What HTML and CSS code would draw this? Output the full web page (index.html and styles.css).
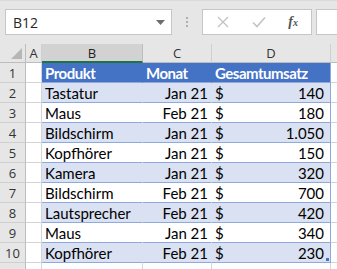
FILE: index.html
```html
<!DOCTYPE html>
<html lang="de">
<head>
<meta charset="utf-8">
<title>Tabelle</title>
<link rel="stylesheet" href="styles.css">
</head>
<body>
<div class="app">
  <div class="formula-bar">
    <div class="name-box">
      <span class="name-text">B12</span>
      <svg class="drop" width="9" height="5" viewBox="0 0 9 5"><path d="M0 0h9L4.5 5z" fill="#6d6d6d"/></svg>
    </div>
    <div class="grip"><i></i><i></i><i></i></div>
    <div class="fx-buttons">
      <svg width="12" height="12" viewBox="0 0 12 12"><path d="M1 1L11 11M11 1L1 11" stroke="#c4c4c4" stroke-width="1.4" fill="none"/></svg>
      <svg width="14" height="12" viewBox="0 0 14 12"><path d="M1 6.5L5 10.5L13 1.5" stroke="#c4c4c4" stroke-width="1.6" fill="none"/></svg>
      <span class="fx">f<sub>x</sub></span>
    </div>
    <div class="formula-input"></div>
  </div>

  <div class="sheet">
    <div class="corner"></div>
    <div class="colhead">A</div>
    <div class="colhead sel">B</div>
    <div class="colhead">C</div>
    <div class="colhead">D</div>
    <div class="colhead last"></div>

    <div class="rowhead">1</div><div class="cell"></div>
    <div class="cell th">Produkt</div><div class="cell th">Monat</div><div class="cell th">Gesamtumsatz</div><div class="cell"></div>

    <div class="rowhead">2</div><div class="cell"></div>
    <div class="cell band">Tastatur</div><div class="cell band r">Jan 21</div><div class="cell band money"><span>$</span><span>140</span></div><div class="cell"></div>

    <div class="rowhead">3</div><div class="cell"></div>
    <div class="cell plain">Maus</div><div class="cell plain r">Feb 21</div><div class="cell plain money"><span>$</span><span>180</span></div><div class="cell"></div>

    <div class="rowhead">4</div><div class="cell"></div>
    <div class="cell band">Bildschirm</div><div class="cell band r">Jan 21</div><div class="cell band money"><span>$</span><span>1.050</span></div><div class="cell"></div>

    <div class="rowhead">5</div><div class="cell"></div>
    <div class="cell plain">Kopfhörer</div><div class="cell plain r">Jan 21</div><div class="cell plain money"><span>$</span><span>150</span></div><div class="cell"></div>

    <div class="rowhead">6</div><div class="cell"></div>
    <div class="cell band">Kamera</div><div class="cell band r">Jan 21</div><div class="cell band money"><span>$</span><span>320</span></div><div class="cell"></div>

    <div class="rowhead">7</div><div class="cell"></div>
    <div class="cell plain">Bildschirm</div><div class="cell plain r">Feb 21</div><div class="cell plain money"><span>$</span><span>700</span></div><div class="cell"></div>

    <div class="rowhead">8</div><div class="cell"></div>
    <div class="cell band">Lautsprecher</div><div class="cell band r">Feb 21</div><div class="cell band money"><span>$</span><span>420</span></div><div class="cell"></div>

    <div class="rowhead">9</div><div class="cell"></div>
    <div class="cell plain">Maus</div><div class="cell plain r">Jan 21</div><div class="cell plain money"><span>$</span><span>340</span></div><div class="cell"></div>

    <div class="rowhead">10</div><div class="cell"></div>
    <div class="cell band">Kopfhörer</div><div class="cell band r">Feb 21</div><div class="cell band money end"><span>$</span><span>230</span><b class="handle"></b></div><div class="cell"></div>

    <div class="rowhead"></div><div class="cell"></div>
    <div class="cell"></div><div class="cell"></div><div class="cell"></div><div class="cell"></div>
  </div>
</div>
</body>
</html>
```

FILE: styles.css
```css
html, body {
  margin: 0;
  padding: 0;
  background: #ffffff;
}

.app {
  width: 337px;
  height: 269px;
  overflow: hidden;
  background: #e6e6e6;
  font-family: Lato, "Open Sans", sans-serif;
}

/* formula bar */
.formula-bar {
  height: 44px;
  box-sizing: border-box;
  padding: 8px 0 0 5px;
  display: flex;
  align-items: flex-start;
  border-top: 1px solid #dadada;
}

.name-box {
  width: 167px;
  height: 26px;
  box-sizing: border-box;
  background: #fff;
  border: 1px solid #c6c6c6;
  display: flex;
  align-items: center;
  justify-content: space-between;
  padding: 0 6px 0 7px;
}

.name-text {
  font-family: "Open Sans", sans-serif;
  font-size: 14px;
  color: #262626;
}

.drop { margin-top: 1px; }

.grip {
  width: 30px;
  height: 26px;
  display: flex;
  flex-direction: column;
  align-items: center;
  justify-content: center;
  gap: 2px;
}

.grip i {
  display: block;
  width: 2px;
  height: 2px;
  background: #b0b0b0;
}

.fx-buttons {
  width: 110px;
  height: 26px;
  box-sizing: border-box;
  background: #fff;
  border: 1px solid #c6c6c6;
  display: flex;
  align-items: center;
  justify-content: space-between;
  padding: 0 13px 0 14px;
}

.fx {
  font-family: "Liberation Serif", serif;
  font-style: italic;
  font-weight: bold;
  font-size: 14px;
  color: #555;
  line-height: 1;
}

.fx sub {
  font-size: 10px;
  vertical-align: 0;
}

.formula-input {
  margin-left: 4px;
  flex: 1;
  height: 26px;
  box-sizing: border-box;
  background: #fff;
  border: 1px solid #c6c6c6;
  border-right: none;
}

/* sheet grid */
.sheet {
  display: grid;
  grid-template-columns: 26px 16px 101px 69px 119px 1fr;
  grid-template-rows: 19px repeat(11, 20px);
  background: #fff;
  font-size: 15px;
  color: #000;
}

.corner,
.colhead {
  background: #e6e6e6;
  border-right: 1px solid #bdbdbd;
  border-bottom: 1px solid #bdbdbd;
  box-sizing: border-box;
}

.corner {
  position: relative;
}

.corner::after {
  content: "";
  position: absolute;
  right: 3px;
  bottom: 3px;
  width: 0;
  height: 0;
  border-left: 11px solid transparent;
  border-bottom: 11px solid #b6b6b6;
}

.colhead {
  display: flex;
  align-items: center;
  justify-content: center;
  font-family: "Open Sans", sans-serif;
  font-size: 13px;
  color: #333;
  border-right-color: #cfcfcf;
}

.colhead.sel {
  background: #d2d2d2;
  border-bottom: 2px solid #217346;
  color: #1e1e1e;
  border-right-color: #bdbdbd;
}

.colhead.last { border-right: none; }

.rowhead {
  background: #e6e6e6;
  border-right: 1px solid #bdbdbd;
  border-bottom: 1px solid #cfcfcf;
  box-sizing: border-box;
  display: flex;
  align-items: center;
  justify-content: center;
  font-family: "Open Sans", sans-serif;
  font-size: 13px;
  color: #333;
}

.cell {
  box-sizing: border-box;
  border-right: 1px solid #d4d4d4;
  border-bottom: 1px solid #d4d4d4;
  padding: 1px 3px 0 3px;
  display: flex;
  align-items: center;
  white-space: nowrap;
  overflow: hidden;
}

.cell.r { justify-content: flex-end; }

.cell.th {
  background: #4472c4;
  color: #fff;
  font-weight: bold;
  letter-spacing: -0.5px;
  border-right-color: #4472c4;
  border-bottom-color: #8ea9db;
}

.cell.band {
  background: #d9e1f2;
  border-right-color: #d9e1f2;
  border-bottom-color: #8ea9db;
}

.cell.plain {
  border-right-color: #ffffff;
  border-bottom-color: #8ea9db;
}

.cell.th:nth-child(6n+5),
.cell.band:nth-child(6n+5),
.cell.plain:nth-child(6n+5) {
  border-right-color: #8ea9db;
}

.cell.money {
  justify-content: space-between;
  padding-left: 3px;
  padding-right: 6px;
}

.cell.end {
  position: relative;
}

.handle {
  position: absolute;
  right: 1px;
  bottom: 1px;
  width: 3px;
  height: 3px;
  background: #4472c4;
}
```
